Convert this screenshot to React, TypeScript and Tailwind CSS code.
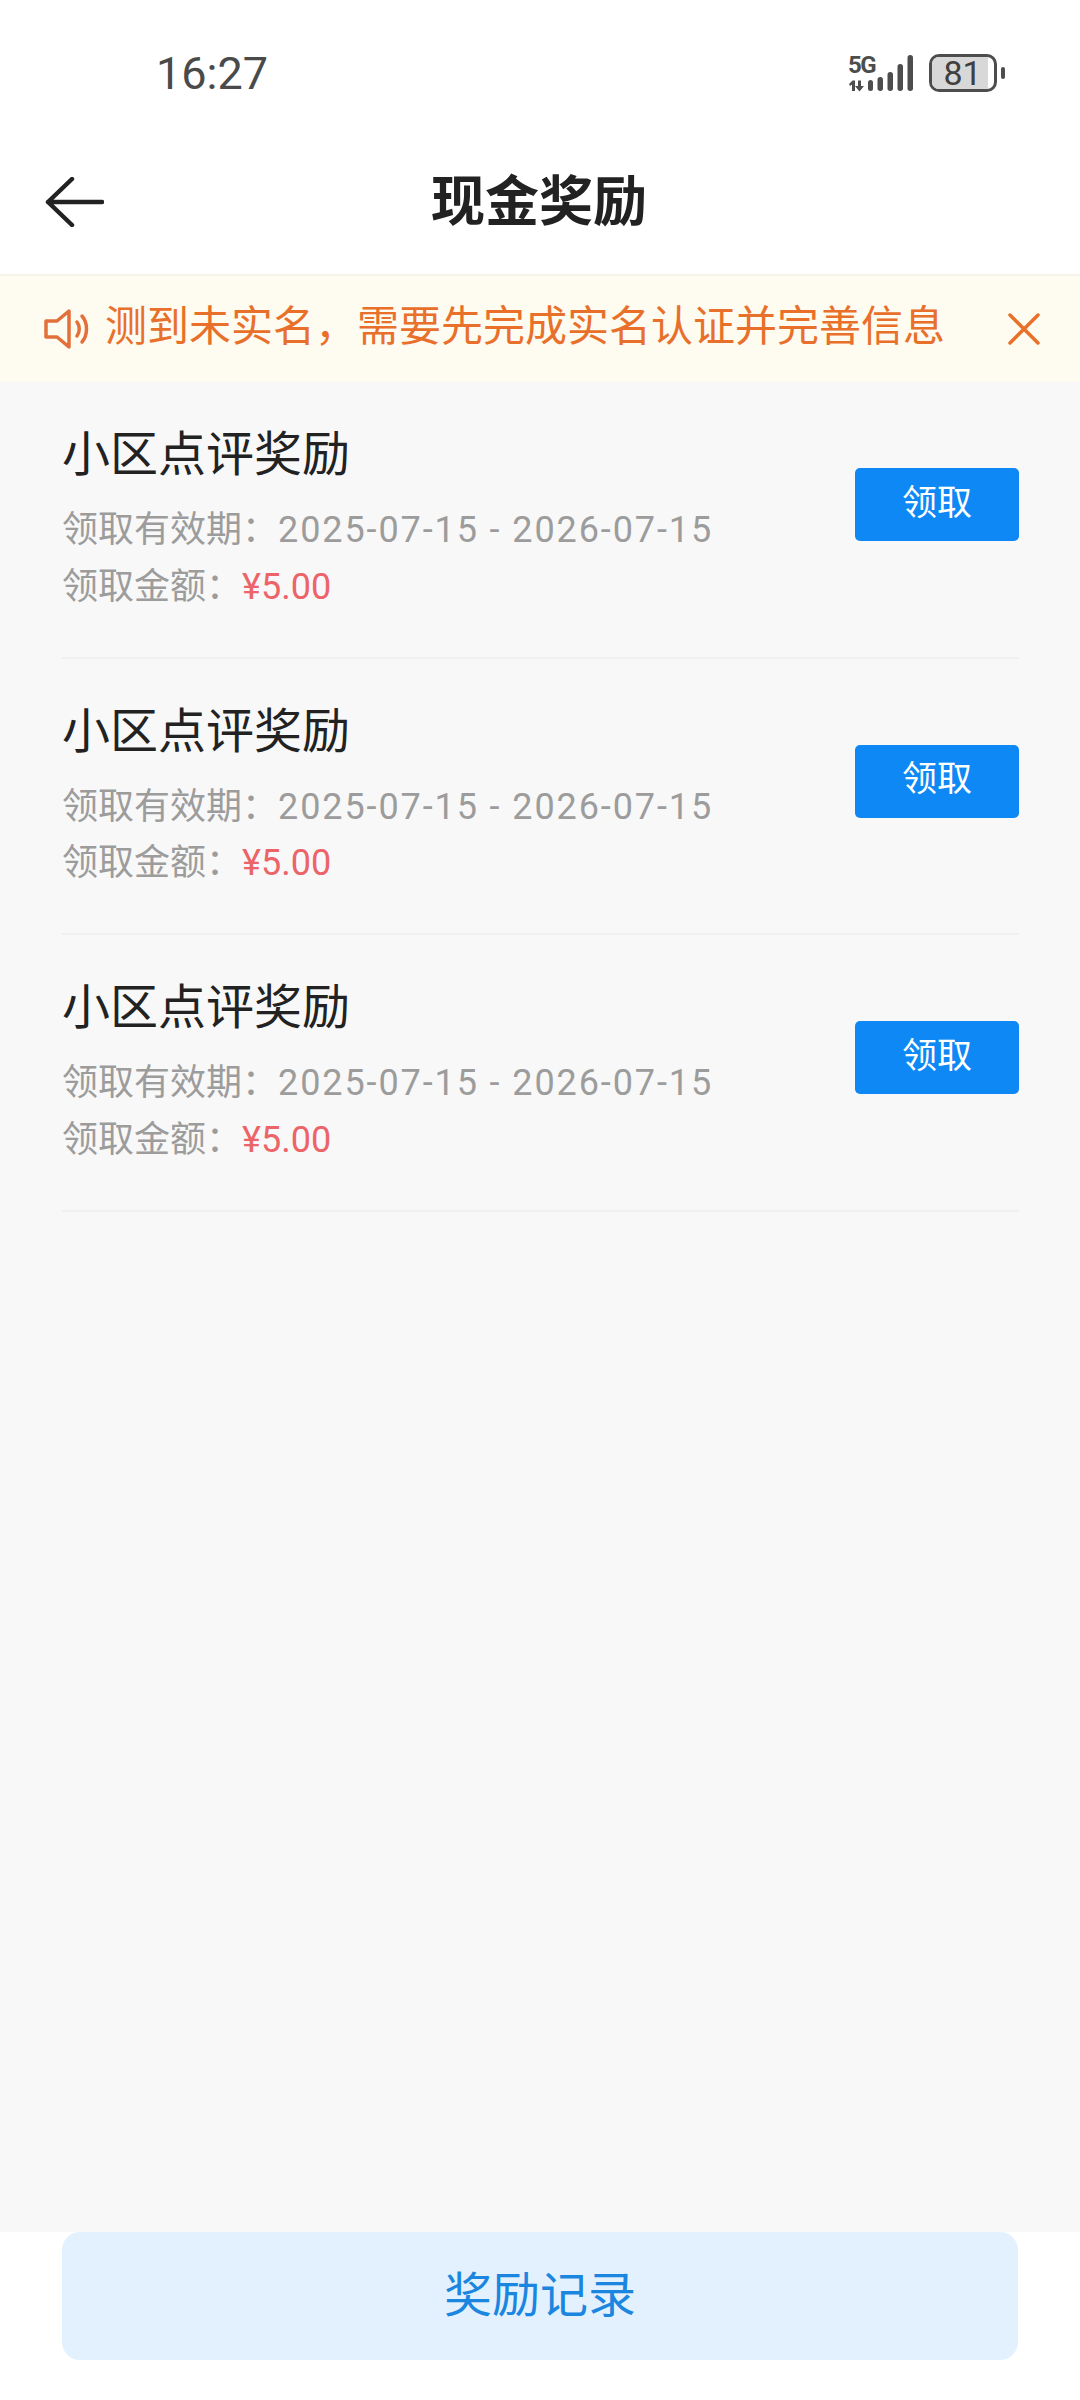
const font = "font-['Roboto','Noto_Sans_CJK_SC',sans-serif]"

function StatusIcons() {
  return (
    <div className="flex items-start">
      <div className="relative w-[72px] h-[40px]">
        <span className="absolute left-0 top-0 text-[24px] leading-[22px] font-bold text-[#4d4d4d] tracking-[-1.5px]">5G</span>
        <svg className="absolute left-0 top-0" width="72" height="40" viewBox="0 0 72 40" fill="#4d4d4d">
          <path d="M1 30l3.500-3.500H7V37H4v-6.500L2 32zM10 26.500h3V32h3l-4.500 5.500L7 32h3z" />
          <rect x="20" y="26" width="5" height="11" rx="2.500" />
          <rect x="29.500" y="23" width="5.500" height="14" rx="2.700" />
          <rect x="39.500" y="18" width="5.500" height="19" rx="2.700" />
          <rect x="49.500" y="10" width="5.500" height="27" rx="2.700" />
          <rect x="59.500" y="1" width="5.500" height="36" rx="2.700" />
        </svg>
      </div>
      <div className="ml-[9px] relative w-[68px] h-[38px] rounded-[10px] border-[3px] border-[#4d4d4d] overflow-hidden bg-white">
        <div className="h-full w-[56px] bg-[#d8d8d8]" />
        <span className="absolute inset-0 flex items-center justify-center pl-[1px] pr-[2px] text-[34px] leading-none text-[#404040]">81</span>
      </div>
      <div className="ml-[4px] mt-[13px] w-[4px] h-[12px] rounded-full bg-[#4d4d4d]" />
    </div>
  )
}

function Row() {
  return (
    <div className="ml-[62px] mr-[61px] h-[276.5px] border-b-2 border-[#f0f0f0] flex items-start justify-between">
      <div className="pt-[41px]">
        <div className="text-[48px] leading-[64px] text-[#222222]">小区点评奖励</div>
        <div className="mt-[15px] text-[36px] leading-[56.500px] text-[#9c9c9c]">
          领取有效期：<span className="tracking-[1.900px]">2025-07-15 - 2026-07-15</span>
        </div>
        <div className="text-[36px] leading-[56.500px] text-[#9c9c9c]">
          领取金额：<span className="text-[#ec6468]">¥5.00</span>
        </div>
      </div>
      <button className="mt-[86px] w-[164px] h-[73px] pb-[3px] rounded-[5px] bg-[#0d88f5] text-white text-[35px] leading-none">
        领取
      </button>
    </div>
  )
}

export default function App() {
  return (
    <div className={`${font} w-[1080px] h-[2400px] flex flex-col bg-[#f8f8f8]`}>
      <div className="bg-white">
        <div className="h-[140px] flex items-start justify-between pl-[156px] pr-[75px] pt-[54px]">
          <span className="text-[45px] leading-[40px] text-[#4a4a4a]">16:27</span>
          <StatusIcons />
        </div>
        <div className="h-[134px] grid grid-cols-[1fr_auto_1fr] items-center pl-[45px] pr-[47px] pb-[10px]">
          <svg width="59" height="50" viewBox="0 0 59 50" fill="none" stroke="#222222" strokeWidth="4.500" strokeLinecap="round" strokeLinejoin="round">
            <path d="M27 2L3 25l24 23M3 25h54" />
          </svg>
          <h1 className="text-[54px] leading-none font-bold text-[#222222] mt-[2px]">现金奖励</h1>
          <div />
        </div>
      </div>

      <div className="h-[108px] bg-[#fefbf0] border-t-2 border-[#f5f3ea] flex items-center pl-[44px] pr-[39px] text-[#e8702a]">
        <svg className="shrink-0" width="48" height="42" viewBox="0 0 48 42" fill="none" stroke="#e2703a" strokeWidth="3.500" strokeLinejoin="round" strokeLinecap="round">
          <path d="M2 13h11L25 3v36L13 29H2z" />
          <path d="M33 14c3 4 3 10 0 14M38 8c6 7 6 19 0 26" />
        </svg>
        <span className="ml-[13px] pb-[5px] text-[42px] leading-none whitespace-nowrap">测到未实名，需要先完成实名认证并完善信息</span>
        <svg className="ml-auto shrink-0" width="34" height="34" viewBox="0 0 34 34" fill="none" stroke="#e8702a" strokeWidth="3.500" strokeLinecap="round">
          <path d="M3 3l28 28M31 3L3 31" />
        </svg>
      </div>

      <div className="flex-1">
        <Row />
        <Row />
        <Row />
      </div>

      <div className="h-[168px] bg-white px-[62px]">
        <button className="w-full h-[128px] rounded-[18px] bg-[#e2f1fd] text-[#1a86e0] text-[48px] leading-none">
          奖励记录
        </button>
      </div>
    </div>
  )
}
